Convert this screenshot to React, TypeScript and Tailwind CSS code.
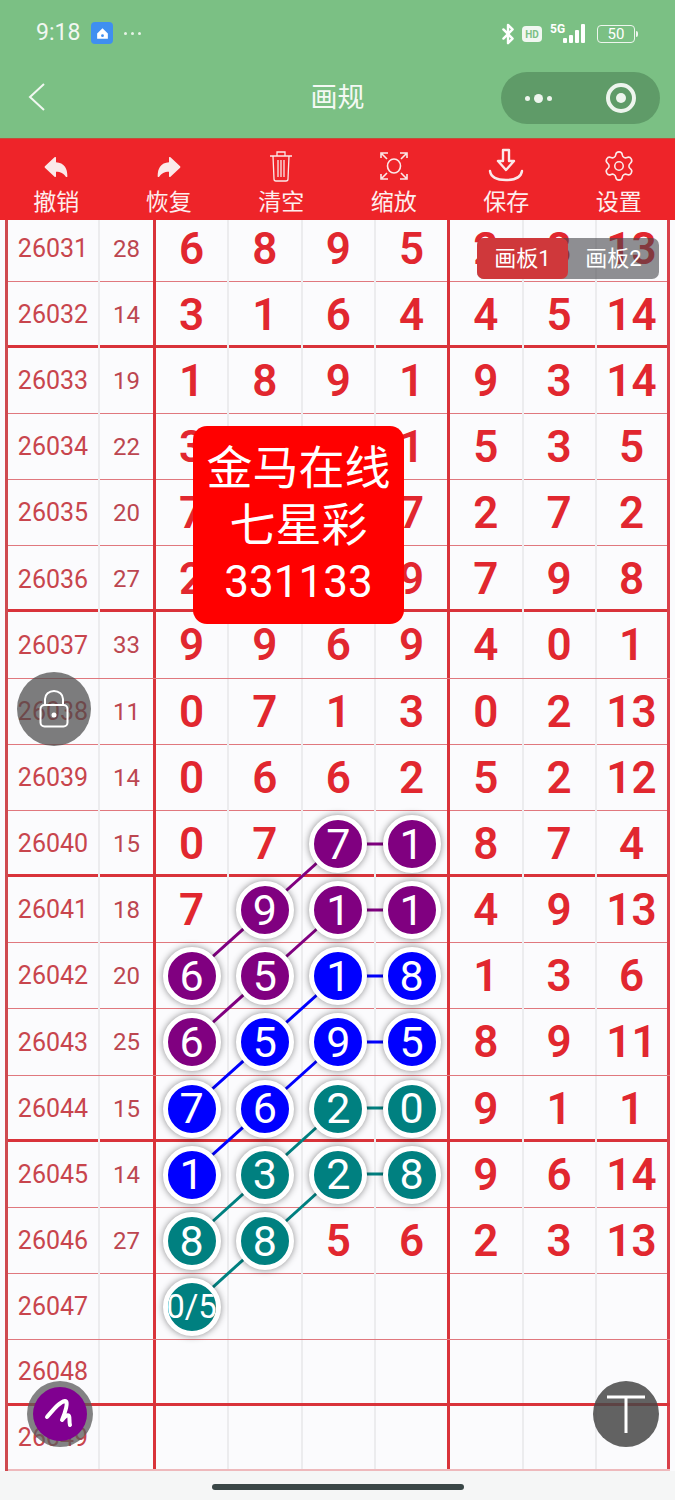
import { IoArrowUndo, IoArrowRedo } from "react-icons/io5";
import { Bluetooth, Settings } from "lucide-react";

type Tone = "p" | "b" | "t";
type Cell = string | [string, Tone];

const P = (v: string): Cell => [v, "p"];
const B = (v: string): Cell => [v, "b"];
const T = (v: string): Cell => [v, "t"];

const rows: { id: string; sum: string; cells: Cell[] }[] = [
  { id: "26031", sum: "28", cells: ["6", "8", "9", "5", "2", "8", "13"] },
  { id: "26032", sum: "14", cells: ["3", "1", "6", "4", "4", "5", "14"] },
  { id: "26033", sum: "19", cells: ["1", "8", "9", "1", "9", "3", "14"] },
  { id: "26034", sum: "22", cells: ["3", "", "", "1", "5", "3", "5"] },
  { id: "26035", sum: "20", cells: ["7", "", "", "7", "2", "7", "2"] },
  { id: "26036", sum: "27", cells: ["2", "", "", "9", "7", "9", "8"] },
  { id: "26037", sum: "33", cells: ["9", "9", "6", "9", "4", "0", "1"] },
  { id: "26038", sum: "11", cells: ["0", "7", "1", "3", "0", "2", "13"] },
  { id: "26039", sum: "14", cells: ["0", "6", "6", "2", "5", "2", "12"] },
  { id: "26040", sum: "15", cells: ["0", "7", P("7"), P("1"), "8", "7", "4"] },
  { id: "26041", sum: "18", cells: ["7", P("9"), P("1"), P("1"), "4", "9", "13"] },
  { id: "26042", sum: "20", cells: [P("6"), P("5"), B("1"), B("8"), "1", "3", "6"] },
  { id: "26043", sum: "25", cells: [P("6"), B("5"), B("9"), B("5"), "8", "9", "11"] },
  { id: "26044", sum: "15", cells: [B("7"), B("6"), T("2"), T("0"), "9", "1", "1"] },
  { id: "26045", sum: "14", cells: [B("1"), T("3"), T("2"), T("8"), "9", "6", "14"] },
  { id: "26046", sum: "27", cells: [T("8"), T("8"), "5", "6", "2", "3", "13"] },
  { id: "26047", sum: "", cells: [T("0/5"), "", "", "", "", "", ""] },
  { id: "26048", sum: "", cells: ["", "", "", "", "", "", ""] },
  { id: "26049", sum: "", cells: ["", "", "", "", "", "", ""] },
];

// connector coords, relative to the top of the grid (y - 220)
const links: { stroke: string; pts: number[] }[] = [
  { stroke: "#800080", pts: [338, 624, 191, 756] },
  { stroke: "#800080", pts: [338, 690, 191, 822] },
  { stroke: "#0000ff", pts: [338, 756, 191, 888] },
  { stroke: "#0000ff", pts: [338, 822, 191, 954] },
  { stroke: "#008080", pts: [338, 888, 191, 1021] },
  { stroke: "#008080", pts: [338, 954, 191, 1087] },
  { stroke: "#800080", pts: [338, 624, 411, 624] },
  { stroke: "#800080", pts: [338, 690, 411, 690] },
  { stroke: "#0000ff", pts: [338, 756, 411, 756] },
  { stroke: "#0000ff", pts: [338, 822, 411, 822] },
  { stroke: "#008080", pts: [338, 888, 411, 888] },
  { stroke: "#008080", pts: [338, 954, 411, 954] },
];

function Ball({ value, tone }: { value: string; tone: Tone }) {
  const bg = tone === "p" ? "bg-[#800080]" : tone === "b" ? "bg-[#0000ff]" : "bg-[#008080]";
  return (
    <div
      className={`relative z-10 flex h-[58px] w-[58px] shrink-0 items-center justify-center overflow-hidden rounded-full border-[5px] border-white font-normal text-white shadow-[0_0_7px_rgba(0,0,0,0.45)] ${bg} ${
        value.length > 1 ? "text-[33px]" : "text-[43px]"
      }`}
    >
      {value}
    </div>
  );
}

function Toolbar() {
  const cls = "h-[34px] w-[36px] text-[#fbe9e9]";
  const items = [
    { label: "撤销", icon: <IoArrowUndo className="mt-[2px] h-[28px] w-[30px] text-[#fbe9e9]" /> },
    { label: "恢复", icon: <IoArrowRedo className="mt-[2px] h-[28px] w-[30px] text-[#fbe9e9]" /> },
    {
      label: "清空",
      icon: (
        <svg viewBox="0 0 36 34" className={cls} fill="none" stroke="currentColor" strokeWidth="1.3">
          <path d="M7 7h22M14 7V3h8v4M10 7l1 23a2 2 0 0 0 2 2h10a2 2 0 0 0 2-2l1-23" />
          <path d="M15 11v17M18 11v17M21 11v17" />
        </svg>
      ),
    },
    {
      label: "缩放",
      icon: (
        <svg viewBox="0 0 36 34" className={cls} fill="none" stroke="currentColor" strokeWidth="1.6">
          <ellipse cx="18" cy="17" rx="6.500" ry="7" />
          <path d="M5 9V4h7M6 5l5 5M31 9V4h-7M30 5l-5 5M5 25v5h7M6 29l5-5M31 25v5h-7M30 29l-5-5" />
        </svg>
      ),
    },
    {
      label: "保存",
      icon: (
        <svg viewBox="0 0 36 34" className="-mt-[2px] h-[34px] w-[36px] text-[#fbe9e9]" fill="none" stroke="currentColor" strokeWidth="2.400">
          <path d="M15 2h6v11h5l-8 9-8-9h5z" strokeLinejoin="round" />
          <path d="M2 23c1 7 7 9 16 9s15-2 16-9" strokeLinecap="round" />
        </svg>
      ),
    },
    { label: "设置", icon: <Settings className="h-[34px] w-[34px] text-[#fbe9e9]" strokeWidth={1.1} /> },
  ];
  return (
    <div className="grid h-[82px] grid-cols-6 border-t border-[#c0503a] bg-[#ee2429]">
      {items.map((it) => (
        <div key={it.label} className="flex flex-col items-center pt-[9px]">
          <div className="flex h-[36px] items-center justify-center">{it.icon}</div>
          <div className="mt-[4px] text-[23px] leading-[30px] text-[#fdeeee]">{it.label}</div>
        </div>
      ))}
    </div>
  );
}

function StatusBar() {
  return (
    <div className="flex h-[66px] items-start justify-between pl-[36px] pr-[37px] pt-[21px]">
      <div className="flex items-center gap-[11px]">
        <span className="text-[23px] leading-[24px] text-[#f1f7f1]">9:18</span>
        <div className="flex h-[22px] w-[22px] items-center justify-center rounded-[4px] bg-[#3f8ff0]">
          <svg viewBox="0 0 14 14" className="h-[15px] w-[15px]" fill="white">
            <path d="M7 2l5 5v5H2V7z" />
            <circle cx="7" cy="9" r="1.300" fill="#3f8ff0" />
          </svg>
        </div>
        <span className="flex gap-[4px]">
          <i className="h-[3px] w-[3px] rounded-full bg-[#e6f2e6]" />
          <i className="h-[3px] w-[3px] rounded-full bg-[#e6f2e6]" />
          <i className="h-[3px] w-[3px] rounded-full bg-[#e6f2e6]" />
        </span>
      </div>
      <div className="flex items-center">
        <Bluetooth className="h-[26px] w-[22px] text-white" strokeWidth={2.6} />
        <div className="ml-[3px] flex h-[16px] w-[20px] items-center justify-center rounded-[4px] bg-[#f1f7f1] text-[10px] font-bold text-[#7bc084]">
          HD
        </div>
        <div className="relative ml-[8px] h-[22px] w-[39px]">
          <span className="absolute left-0 top-0 text-[12px] font-bold leading-[12px] text-white">5G</span>
          <svg viewBox="0 0 39 22" className="h-[22px] w-[39px]" fill="white">
            <rect x="13" y="15" width="4" height="5" rx="1" />
            <rect x="19" y="12" width="4" height="8" rx="1" />
            <rect x="25" y="7" width="4" height="13" rx="1" />
            <rect x="31" y="1" width="4" height="19" rx="1" />
          </svg>
        </div>
        <div className="ml-[8px] flex h-[18px] w-[38px] items-center justify-center rounded-[4px] border border-[#eef6ee] text-[15px] leading-none text-white">
          50
        </div>
        <div className="ml-[1px] h-[6px] w-[2px] rounded-r-sm bg-[#eef6ee]" />
      </div>
    </div>
  );
}

function NavBar() {
  return (
    <div className="relative flex h-[72px] items-start justify-center">
      <svg viewBox="0 0 18 28" className="absolute left-[28px] top-[17px] h-[28px] w-[18px]" fill="none" stroke="#f1f7f1" strokeWidth="2">
        <path d="M16 1L2 14l14 13" />
      </svg>
      <div className="mt-[16px] text-[27px] leading-[32px] text-[#f4f9f4]">画规</div>
      <div className="absolute left-[501px] top-[6px] flex h-[52px] w-[159px] items-center justify-between rounded-full bg-[#5f9b68] pl-[24px] pr-[24px]">
        <div className="flex items-center gap-[4px]">
          <i className="h-[5px] w-[5px] rounded-full bg-[#eef5ee]" />
          <i className="h-[9px] w-[9px] rounded-full bg-[#eef5ee]" />
          <i className="h-[5px] w-[5px] rounded-full bg-[#eef5ee]" />
        </div>
        <div className="flex h-[30px] w-[30px] items-center justify-center rounded-full border-[4px] border-[#eef5ee]">
          <i className="h-[10px] w-[10px] rounded-full bg-[#eef5ee]" />
        </div>
      </div>
    </div>
  );
}

const colCls = [
  "border-r-2 border-r-[#ececee]",
  "border-r-2 border-r-[#ececee]",
  "border-r-2 border-r-[#ececee]",
  "border-r-[3px] border-r-[#d9333a]",
  "border-r-2 border-r-[#ececee]",
  "border-r-2 border-r-[#ececee]",
  "border-r-[3px] border-r-[#d9404a]",
];

function Board() {
  return (
    <div className="relative h-[1251px] overflow-hidden pl-[5px] pr-[5px]">
      <svg viewBox="0 0 675 1251" className="absolute inset-0 h-[1251px] w-[675px]" fill="none" strokeWidth="3">
        {links.map((l, i) => (
          <line key={i} x1={l.pts[0]} y1={l.pts[1]} x2={l.pts[2]} y2={l.pts[3]} stroke={l.stroke} />
        ))}
      </svg>
      <div className="-mt-[4.5px] border-l-[3px] border-l-[#cf4a50]">
        {rows.map((r, i) => (
          <div
            key={r.id}
            className={`grid grid-cols-[92px_56px_73px_73.500px_73.500px_74px_73.500px_73px_73px] ${
              i === rows.length - 1 ? "h-[65px]" : "h-[66.17px]"
            } ${
              i % 4 === 1 || i === rows.length - 2
                ? "border-b-[3px] border-b-[#d9333a]"
                : i === rows.length - 1
                  ? "border-b-2 border-b-[#eeb9bc]"
                  : "border-b border-b-[#e0787e]"
            }`}
          >
            <div className="flex items-center justify-center border-r-2 border-r-[#ececee] text-[25px] font-normal text-[#c8454d]">
              {r.id}
            </div>
            <div className="flex items-center justify-center border-r-[3px] border-r-[#d9333a] text-[24px] font-normal text-[#bc4650]">
              {r.sum}
            </div>
            {r.cells.map((c, j) => (
              <div
                key={j}
                className={`flex items-center justify-center text-[44px] font-semibold text-[#e1272f] ${colCls[j]}`}
              >
                {typeof c === "string" ? c : <Ball value={c[0]} tone={c[1]} />}
              </div>
            ))}
          </div>
        ))}
      </div>

      {/* 画板 tabs */}
      <div className="absolute left-[477px] top-[18px] z-20 flex h-[41px] w-[182px] rounded-[7px] bg-[rgba(70,70,75,0.6)] text-[22px] text-white">
        <div className="flex w-[91px] items-center justify-center rounded-[7px] bg-[#cf383b]">画板1</div>
        <div className="flex flex-1 items-center justify-center">画板2</div>
      </div>

      {/* 彩种 card */}
      <div className="absolute left-[193px] top-[206px] z-20 flex h-[198px] w-[211px] flex-col items-center justify-center rounded-[14px] bg-[#ff0000] text-[46px] leading-[57px] text-white">
        <div>金马在线</div>
        <div>七星彩</div>
        <div className="text-[44px]">331133</div>
      </div>

      {/* lock */}
      <div className="absolute left-[17px] top-[452px] z-20 flex h-[74px] w-[74px] items-center justify-center rounded-full bg-[rgba(75,75,75,0.72)]">
        <svg viewBox="0 0 30 38" className="h-[38px] w-[30px]" fill="none" stroke="white" strokeWidth="2">
          <path d="M6 15V9a9 8 0 0 1 18 0v6" />
          <rect x="1.500" y="15" width="27" height="21.500" rx="4" />
          <circle cx="15" cy="25" r="2.500" fill="white" stroke="none" />
        </svg>
      </div>

      {/* brush */}
      <div className="absolute left-[27px] top-[1161px] z-20 flex h-[66px] w-[66px] items-center justify-center rounded-full bg-[rgba(90,90,90,0.75)]">
        <div className="flex h-[54px] w-[54px] items-center justify-center rounded-full bg-[#800090]">
          <svg viewBox="0 0 32 32" className="h-[32px] w-[32px]" fill="none" stroke="white" strokeWidth="4" strokeLinecap="round" strokeLinejoin="round">
            <path d="M3 19C9 12 15 4 21 3c4 0 0 12-3 19 3-4 6-6 7-4 1 2 0 6 1 9" />
          </svg>
        </div>
      </div>

      {/* text tool */}
      <div className="absolute left-[593px] top-[1161px] z-20 flex h-[66px] w-[66px] items-center justify-center rounded-full bg-[rgba(70,70,70,0.85)]">
        <svg viewBox="0 0 40 40" className="h-[40px] w-[40px]" fill="none" stroke="white" strokeWidth="3">
          <path d="M1 3h38M20 3v36" />
        </svg>
      </div>
    </div>
  );
}

export default function App() {
  return (
    <div className="h-[1500px] w-[675px] overflow-hidden bg-[#fbfbfd] font-['Roboto','Noto_Sans_CJK_SC',sans-serif]">
      <div className="bg-[#7bc084]">
        <StatusBar />
        <NavBar />
      </div>
      <Toolbar />
      <Board />
      <div className="flex h-[29px] justify-center bg-[#f5f6f6] pt-[13px]">
        <div className="h-[6px] w-[252px] rounded-full bg-[#3a4747]" />
      </div>
    </div>
  );
}
